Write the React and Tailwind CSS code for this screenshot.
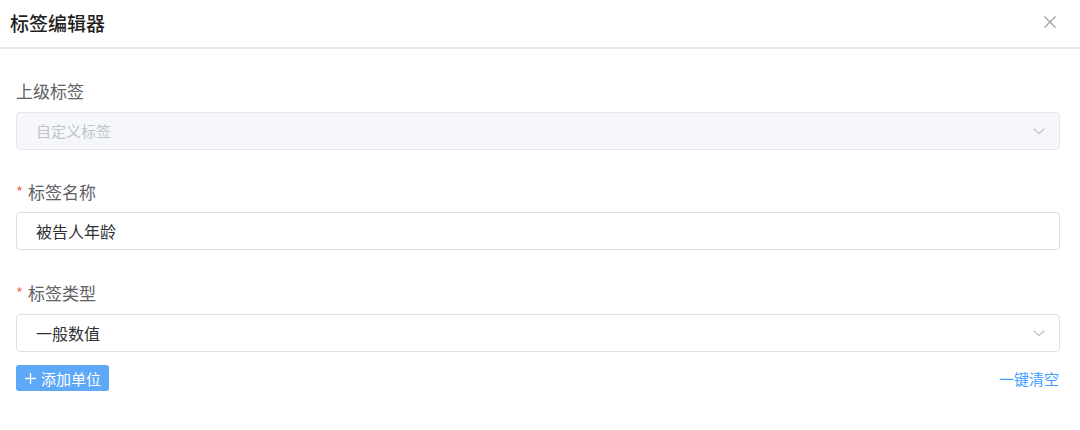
import React from 'react';

const font = "font-['Noto_Sans_CJK_SC','Noto_Sans',sans-serif]";

const Chevron = () => (
  <svg width="14" height="14" viewBox="0 0 14 14" fill="none" className="text-[#c0c4cc]">
    <path d="M2 5l5 4.5L12 5" stroke="currentColor" strokeWidth="1.2" strokeLinecap="round" strokeLinejoin="round" />
  </svg>
);

const Label = ({ required, children }) => (
  <div className="flex items-center h-[20px] text-[17px] text-[#606266] leading-none">
    {required && <span className="text-[#f56c6c] mr-[5px] text-[15px]">*</span>}
    <span>{children}</span>
  </div>
);

const Field = ({ disabled, select, value, placeholder }) => (
  <div
    className={`flex items-center justify-between h-[38px] px-[19px] rounded-[4px] border ${
      disabled ? 'bg-[#f5f7fa] border-[#e4e7ed]' : 'bg-white border-[#dcdfe6]'
    }`}
  >
    <span className={`${value ? 'text-[16px] text-[#303133]' : 'text-[15px] text-[#c0c4cc]'}`}>{value || placeholder}</span>
    {select && (
      <span className="mr-[-6px]">
        <Chevron />
      </span>
    )}
  </div>
);

const App = () => {
  return (
    <div className={`w-[1080px] h-[430px] bg-white ${font}`}>
      <div className="flex items-center justify-between h-[49px] pl-[10px] pr-[23px] pb-[3px] border-b-2 border-[#e8e8ee]">
        <h1 className="text-[19px] font-medium text-[#1f1f1f] leading-none">标签编辑器</h1>
        <svg width="14" height="14" viewBox="0 0 14 14" className="text-[#a0a0a8]">
          <path d="M1.5 1.5l11 11M12.5 1.5l-11 11" stroke="currentColor" strokeWidth="1.3" />
        </svg>
      </div>

      <div className="px-[16px] pr-[20px] pt-[31px]">
        <Label>上级标签</Label>
        <div className="mt-[12px]">
          <Field disabled select placeholder="自定义标签" />
        </div>

        <div className="mt-[31px]">
          <Label required>标签名称</Label>
        </div>
        <div className="mt-[11px]">
          <Field value="被告人年龄" />
        </div>

        <div className="mt-[32px]">
          <Label required>标签类型</Label>
        </div>
        <div className="mt-[12px]">
          <Field select value="一般数值" />
        </div>

        <div className="flex items-center justify-between mt-[13px]">
          <button className="flex items-center gap-[4px] h-[26px] pl-[8px] pr-[8px] rounded-[3px] bg-[#5ea8f8] text-white text-[15px] leading-none">
            <svg width="13" height="13" viewBox="0 0 13 13">
              <path d="M6.5 1v11M1 6.5h11" stroke="currentColor" strokeWidth="1.3" />
            </svg>
            <span>添加单位</span>
          </button>
          <span className="text-[15px] text-[#409eff] mt-[2px] mr-[1px]">一键清空</span>
        </div>
      </div>
    </div>
  );
};

export default App;
